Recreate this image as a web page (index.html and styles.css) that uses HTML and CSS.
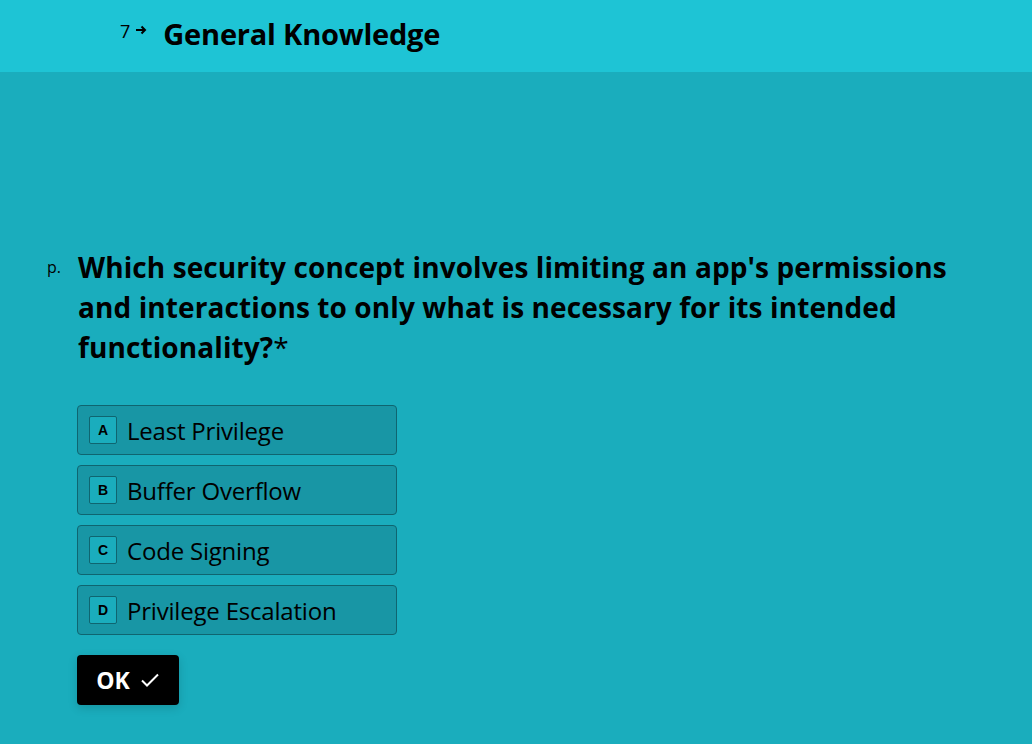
FILE: index.html
```html
<!DOCTYPE html>
<html>
<head>
<meta charset="utf-8">
<link rel="stylesheet" href="styles.css">
</head>
<body>
<header class="topbar">
  <span class="num">7</span>
  <svg class="arrow" width="12" height="10" viewBox="0 0 12 10"><path d="M1 5H10M6.5 1.5L10 5L6.5 8.5" fill="none" stroke="#000" stroke-width="2"/></svg>
  <h1 class="title">General Knowledge</h1>
</header>
<main class="content">
  <div class="question">
    <span class="qnum">p.</span>
    <h2 class="qtext">Which security concept involves limiting an app's permissions and interactions to only what is necessary for its intended <span class="nw">functionality?<span class="req">*</span></span></h2>
  </div>
  <div class="options">
    <div class="option"><span class="key">A</span><span class="label">Least Privilege</span></div>
    <div class="option"><span class="key">B</span><span class="label">Buffer Overflow</span></div>
    <div class="option"><span class="key">C</span><span class="label">Code Signing</span></div>
    <div class="option"><span class="key">D</span><span class="label">Privilege Escalation</span></div>
  </div>
  <button class="ok">OK <svg width="20" height="16" viewBox="0 0 20 16"><path d="M2 8.5L7 13.5L18 2.5" fill="none" stroke="#fff" stroke-width="2"/></svg></button>
</main>
</body>
</html>
```
FILE: styles.css
```css
html, body {
  margin: 0;
  padding: 0;
}
body {
  background: #1aadbd;
  font-family: "Open Sans", "Noto Sans", sans-serif;
  color: #000;
  height: 744px;
  overflow: hidden;
}
.topbar {
  background: #1ec4d5;
  height: 72px;
  display: flex;
  align-items: center;
  padding-left: 120px;
}
.num {
  font-size: 18px;
  line-height: 1;
  margin-top: -10px;
}
.arrow {
  margin-left: 5px;
  margin-top: -12px;
}
.title {
  margin: -6px 0 0 16px;
  font-size: 29px;
  font-weight: 700;
  letter-spacing: -0.2px;
}
.content {
  padding: 175px 0 0 47px;
}
.question {
  display: flex;
  align-items: flex-start;
}
.qnum {
  font-size: 16px;
  width: 31px;
  margin-top: 9px;
}
.qtext {
  margin: 0;
  font-size: 28px;
  font-weight: 700;
  line-height: 40px;
  width: 885px;
  letter-spacing: 0.1px;
}
.nw {
  white-space: nowrap;
}
.req {
  font-weight: 400;
}
.options {
  margin: 38px 0 0 30px;
  display: flex;
  flex-direction: column;
  gap: 10px;
}
.option {
  width: 318px;
  height: 48px;
  box-sizing: content-box;
  border: 1px solid #0f6570;
  border-radius: 4px;
  background: #1896a5;
  display: flex;
  align-items: center;
  padding: 0;
}
.key {
  width: 26px;
  height: 26px;
  margin-left: 11px;
  border: 1px solid #0f6570;
  border-radius: 2px;
  background: #1aadbd;
  display: flex;
  align-items: center;
  justify-content: center;
  font-family: "Liberation Sans", Arial, sans-serif;
  font-size: 14px;
  font-weight: 700;
}
.label {
  margin-left: 10px;
  font-size: 24px;
  letter-spacing: -0.2px;
}
.ok {
  margin: 20px 0 0 30px;
  width: 102px;
  height: 50px;
  background: #000;
  color: #fff;
  border: none;
  border-radius: 4px;
  box-shadow: 0 3px 10px rgba(0,0,0,0.15);
  font-family: "Open Sans", sans-serif;
  font-size: 23px;
  font-weight: 700;
  display: flex;
  align-items: center;
  justify-content: center;
  gap: 10px;
  padding: 0;
}
```
